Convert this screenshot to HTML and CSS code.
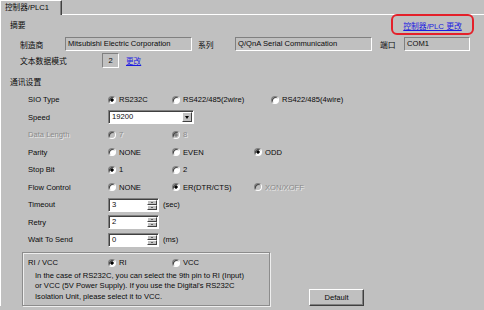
FILE: index.html
```html
<!DOCTYPE html>
<html lang="zh">
<head>
    <meta charset="UTF-8">
    <title>控制器/PLC1</title>
    <link rel="stylesheet" href="styles.css">
</head>
<body>
    <div class="tabs">
        <div class="tab">控制器/PLC1</div>
        <div class="tab-fill"></div>
    </div>
    <div class="panel">
        <div class="head-row">
            <span class="section-title">摘要</span>
            <a class="plc-link" href="#">控制器/PLC 更改</a>
        </div>

        <div class="summary-row">
            <span class="sum-label label-maker">制造商</span>
            <span class="field field-maker">Mitsubishi Electric Corporation</span>
            <span class="sum-label label-series">系列</span>
            <span class="field field-series">Q/QnA Serial Communication</span>
            <span class="sum-label label-port">端口</span>
            <span class="field field-port">COM1</span>
        </div>
        <div class="summary-row mode-row">
            <span class="sum-label label-mode">文本数据模式</span>
            <span class="field field-mode">2</span>
            <a class="change-link" href="#">更改</a>
        </div>

        <div class="section-title comm-title">通讯设置</div>

        <div class="setting-row">
            <span class="setting-label">SIO Type</span>
            <span class="opt"><span class="radio checked"></span>RS232C</span>
            <span class="opt wide"><span class="radio"></span>RS422/485(2wire)</span>
            <span class="opt"><span class="radio"></span>RS422/485(4wire)</span>
        </div>
        <div class="setting-row">
            <span class="setting-label">Speed</span>
            <span class="select">
                <span class="select-value">19200</span>
                <span class="select-btn"><span class="arrow-down"></span></span>
            </span>
        </div>
        <div class="setting-row disabled">
            <span class="setting-label">Data Length</span>
            <span class="opt"><span class="radio"></span>7</span>
            <span class="opt"><span class="radio checked"></span>8</span>
        </div>
        <div class="setting-row">
            <span class="setting-label">Parity</span>
            <span class="opt"><span class="radio"></span>NONE</span>
            <span class="opt mid"><span class="radio"></span>EVEN</span>
            <span class="opt"><span class="radio checked"></span>ODD</span>
        </div>
        <div class="setting-row">
            <span class="setting-label">Stop Bit</span>
            <span class="opt"><span class="radio checked"></span>1</span>
            <span class="opt"><span class="radio"></span>2</span>
        </div>
        <div class="setting-row">
            <span class="setting-label">Flow Control</span>
            <span class="opt"><span class="radio"></span>NONE</span>
            <span class="opt mid"><span class="radio checked"></span>ER(DTR/CTS)</span>
            <span class="opt off"><span class="radio"></span>XON/XOFF</span>
        </div>
        <div class="setting-row">
            <span class="setting-label">Timeout</span>
            <span class="spin">
                <span class="spin-value">3</span>
                <span class="spin-btns">
                    <span class="spin-btn"><span class="arrow-up"></span></span>
                    <span class="spin-btn"><span class="arrow-down"></span></span>
                </span>
            </span>
            <span class="unit">(sec)</span>
        </div>
        <div class="setting-row">
            <span class="setting-label">Retry</span>
            <span class="spin">
                <span class="spin-value">2</span>
                <span class="spin-btns">
                    <span class="spin-btn"><span class="arrow-up"></span></span>
                    <span class="spin-btn"><span class="arrow-down"></span></span>
                </span>
            </span>
        </div>
        <div class="setting-row">
            <span class="setting-label">Wait To Send</span>
            <span class="spin">
                <span class="spin-value">0</span>
                <span class="spin-btns">
                    <span class="spin-btn"><span class="arrow-up"></span></span>
                    <span class="spin-btn"><span class="arrow-down"></span></span>
                </span>
            </span>
            <span class="unit">(ms)</span>
        </div>

        <div class="bottom-row">
            <div class="group">
                <div class="group-row">
                    <span class="setting-label">RI / VCC</span>
                    <span class="opt"><span class="radio checked"></span>RI</span>
                    <span class="opt"><span class="radio"></span>VCC</span>
                </div>
                <p class="group-note">In the case of RS232C, you can select the 9th pin to RI (Input)<br>or VCC (5V Power Supply). If you use the Digital's RS232C<br>Isolation Unit, please select it to VCC.</p>
            </div>
            <button class="btn-default" type="button">Default</button>
        </div>
    </div>
</body>
</html>
```

FILE: styles.css
```css
body {
    margin: 0;
    width: 484px;
    height: 310px;
    overflow: hidden;
    background-color: #c0c0c0;
    color: #0a0a0a;
    font-family: "Liberation Sans", Arial, "Noto Sans CJK SC", sans-serif;
    font-size: 7.6px;
}

/* tab strip */
.tabs {
    display: flex;
    height: 15px;
}
.tab {
    width: 62px;
    box-sizing: border-box;
    padding-left: 4px;
    line-height: 13px;
    border-top: 1px solid #fff;
    border-left: 1px solid #fff;
    border-right: 1px solid #404040;
    box-shadow: inset -1px 0 #808080;
    white-space: nowrap;
}
.tab-fill {
    flex-grow: 1;
    border-bottom: 1px solid #fff;
}

.panel {
    border-left: 1px solid #fff;
    padding: 0 10px 0 9px;
}

.head-row {
    display: flex;
    justify-content: space-between;
    align-items: center;
    height: 21px;
    margin-top: -1px;
}
.section-title {
    font-size: 7.8px;
}
.plc-link {
    box-sizing: border-box;
    height: 21px;
    width: 83px;
    padding-top: 4px;
    text-align: center;
    border: 2px solid #e4202a;
    border-radius: 6px;
    color: #1a1ae0;
    font-size: 7.8px;
}
.change-link {
    color: #1a1ae0;
    margin-left: 7px;
}

/* summary */
.summary-row {
    display: flex;
    align-items: center;
    height: 14px;
    margin-top: 2px;
    padding-left: 10px;
    white-space: nowrap;
}
.mode-row {
    height: 15px;
}
.sum-label {
    font-size: 7.8px;
}
.label-maker { width: 45px; }
.label-series { width: 37px; margin-left: 6px; }
.label-port { width: 24px; margin-left: 8px; }
.label-mode { width: 82px; }

.field {
    box-sizing: border-box;
    height: 14px;
    line-height: 12px;
    padding-left: 2px;
    border: 1px solid;
    border-color: #808080 #fff #fff #808080;
    overflow: hidden;
}
.field-maker { width: 127px; }
.field-series { width: 137px; }
.field-port { width: 66px; }
.field-mode {
    width: 17px;
    height: 15px;
    line-height: 13px;
    padding-left: 0;
    text-align: center;
}

/* communication settings */
.comm-title {
    display: block;
    height: 16px;
    line-height: 16px;
    margin-top: 7px;
}
.setting-row {
    display: flex;
    align-items: center;
    height: 17.5px;
    padding-left: 18px;
    white-space: nowrap;
}
.setting-label {
    width: 80px;
    flex-shrink: 0;
}
.opt {
    display: flex;
    align-items: center;
    flex-shrink: 0;
    width: 64px;
}
.opt:last-child { width: auto; }
.opt.wide { width: 99px; }
.opt.mid { width: 82px; }

.radio {
    box-sizing: border-box;
    flex-shrink: 0;
    width: 8px;
    height: 8px;
    margin-right: 3px;
    border-radius: 50%;
    border: 1px solid;
    border-color: #808080 #fff #fff #808080;
    box-shadow: inset 1px 1px #404040;
    background-color: #fff;
}
.radio.checked {
    background: radial-gradient(circle, #000 0 1.4px, #fff 1.9px);
}

.disabled,
.opt.off {
    color: #8a8a8a;
    text-shadow: 1px 1px #e8e8e8;
}
.disabled .radio,
.opt.off .radio {
    background: #c0c0c0;
}
.disabled .radio.checked {
    background: radial-gradient(circle, #808080 0 1.4px, #c0c0c0 1.9px);
}

.select,
.spin {
    display: flex;
    flex-shrink: 0;
    box-sizing: border-box;
    height: 14px;
    background-color: #fff;
    border: 1px solid;
    border-color: #808080 #fff #fff #808080;
    box-shadow: inset 1px 1px #404040;
}
.select { width: 86px; }
.spin { width: 51px; }
.select-value,
.spin-value {
    flex-grow: 1;
    padding-left: 3px;
    line-height: 12px;
}
.select-btn {
    display: flex;
    align-items: center;
    justify-content: center;
    box-sizing: border-box;
    width: 10px;
    height: 10px;
    margin: 1px;
    background-color: #c0c0c0;
    border: 1px solid;
    border-color: #fff #404040 #404040 #fff;
}
.spin-btns {
    display: flex;
    flex-direction: column;
    width: 10px;
    margin: 1px;
}
.spin-btn {
    display: flex;
    align-items: center;
    justify-content: center;
    box-sizing: border-box;
    height: 5px;
    background-color: #c0c0c0;
    border: 1px solid;
    border-color: #fff #404040 #404040 #fff;
}
.arrow-down {
    border-left: 2.5px solid transparent;
    border-right: 2.5px solid transparent;
    border-top: 3px solid #000;
}
.spin-btn .arrow-down,
.spin-btn .arrow-up {
    border-left-width: 1.5px;
    border-right-width: 1.5px;
}
.spin-btn .arrow-down { border-top-width: 1.5px; }
.arrow-up {
    border-left: 2.5px solid transparent;
    border-right: 2.5px solid transparent;
    border-bottom: 1.5px solid #000;
}
.unit {
    margin-left: 4px;
}

/* RI / VCC group and default button */
.bottom-row {
    display: flex;
    align-items: flex-end;
    margin-top: 3.5px;
}
.group {
    box-sizing: border-box;
    width: 248px;
    height: 54px;
    margin-left: 12px;
    padding: 3px 0 0 5px;
    border: 1px solid #8c8c8c;
    box-shadow: inset 1px 1px #eee, 1px 1px #eee;
}
.group-row {
    display: flex;
    align-items: center;
    height: 13px;
    white-space: nowrap;
}
.group-note {
    margin: 2px 0 0 7px;
    line-height: 10.3px;
    white-space: nowrap;
}
.btn-default {
    box-sizing: border-box;
    width: 55px;
    height: 17px;
    margin-left: 39px;
    padding: 0;
    font-family: inherit;
    font-size: 7.6px;
    color: #0a0a0a;
    background-color: #c0c0c0;
    border: 1px solid;
    border-color: #fff #404040 #404040 #fff;
    box-shadow: inset -1px -1px #808080;
}
```
